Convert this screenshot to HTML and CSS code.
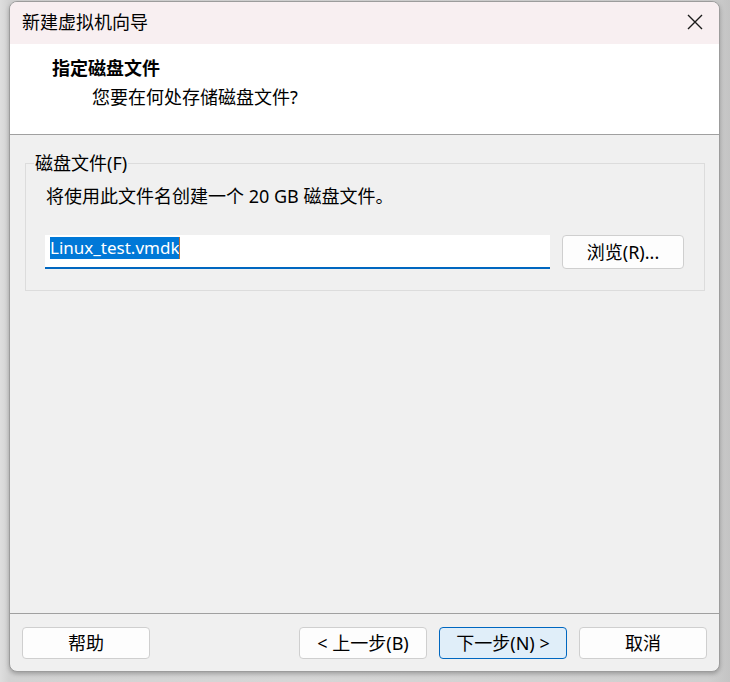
FILE: index.html
```html
<!DOCTYPE html>
<html lang="zh-CN">
<head>
<meta charset="utf-8">
<title>新建虚拟机向导</title>
<link rel="stylesheet" href="styles.css">
</head>
<body>
<div class="window">
  <div class="titlebar">
    <span class="title">新建虚拟机向导</span>
    <svg class="close" width="16" height="16" viewBox="0 0 16 16"><path d="M1 1 L15 15 M15 1 L1 15" stroke="#1a1a1a" stroke-width="1.4" fill="none"/></svg>
  </div>
  <div class="header">
    <div class="h-title">指定磁盘文件</div>
    <div class="h-sub">您要在何处存储磁盘文件?</div>
  </div>
  <div class="main">
    <fieldset class="group">
      <legend>磁盘文件(F)</legend>
      <div class="desc">将使用此文件名创建一个 20 GB 磁盘文件。</div>
      <div class="row">
        <div class="field"><span class="sel">Linux_test.vmdk</span><span class="caret"></span></div>
        <div class="btn browse">浏览(R)...</div>
      </div>
    </fieldset>
  </div>
  <div class="footer">
    <div class="btn">帮助</div>
    <div class="spacer"></div>
    <div class="btn">&lt; 上一步(B)</div>
    <div class="btn primary">下一步(N) &gt;</div>
    <div class="btn">取消</div>
  </div>
</div>
</body>
</html>
```

FILE: styles.css
```css
html, body {
  margin: 0;
  padding: 0;
}
body {
  width: 730px;
  height: 682px;
  overflow: hidden;
  background: linear-gradient(to right, #dedede 0px, #d2d2d2 9px, #d6d6d6 40%, #cfcfcf 97%, #c4c4c4 100%);
  font-family: "Noto Sans", "Noto Sans CJK SC", sans-serif;
  font-size: 18px;
  color: #000;
}
.window {
  box-sizing: border-box;
  margin: 1px 0 0 9px;
  width: 711px;
  height: 671px;
  border: 1px solid #9c9c9c;
  border-radius: 8px;
  overflow: hidden;
  background: #f0f0f0;
  display: flex;
  flex-direction: column;
  box-shadow: 0 2px 4px rgba(0,0,0,0.25);
}
.titlebar {
  height: 42px;
  flex: none;
  background: #f8eff1;
  display: flex;
  align-items: center;
  padding: 0 16px 0 12px;
}
.title {
  flex: 1;
  line-height: 24px;
  margin-top: -2px;
}
.close {
  display: block;
  margin-top: -2px;
}
.header {
  height: 91px;
  flex: none;
  background: #ffffff;
  border-bottom: 1px solid #a0a0a0;
  padding: 12px 0 0 42px;
  box-sizing: border-box;
}
.h-title {
  font-weight: 700;
  line-height: 24px;
}
.h-sub {
  line-height: 24px;
  margin: 5px 0 0 40px;
}
.main {
  flex: 1;
  padding: 16px 14px 0 15px;
}
.group {
  margin: 0;
  border: 1px solid #dcdcdc;
  padding: 9px 20px 21px 19px;
  min-width: 0;
}
.group legend {
  padding: 0 1px;
  margin-left: -11px;
  line-height: 24px;
}
.desc {
  line-height: 24px;
  padding-left: 1px;
}
.row {
  display: flex;
  gap: 12px;
  margin-top: 27px;
}
.field {
  flex: 1;
  height: 34px;
  box-sizing: border-box;
  background: #ffffff;
  border-bottom: 2px solid #0067c0;
  padding: 2px 0 0 5px;
  display: flex;
  align-items: flex-start;
}
.sel {
  background: #0078d7;
  color: #ffffff;
  font-size: 17px;
  line-height: 22px;
  height: 22px;
}
.caret {
  width: 1px;
  height: 22px;
  background: #c07030;
}
.btn {
  box-sizing: border-box;
  width: 128px;
  height: 32px;
  border: 1px solid #cfcfcf;
  border-radius: 4px;
  background: #fdfdfd;
  display: flex;
  align-items: center;
  justify-content: center;
  line-height: 24px;
}
.browse {
  width: 122px;
  height: 34px;
}
.footer {
  flex: none;
  height: 58px;
  box-sizing: border-box;
  border-top: 1px solid #a0a0a0;
  padding: 13px 12px 12px 12px;
  display: flex;
  gap: 12px;
}
.spacer {
  flex: 1;
}
.primary {
  background: #e0eef9;
  border-color: #0067c0;
}
```
